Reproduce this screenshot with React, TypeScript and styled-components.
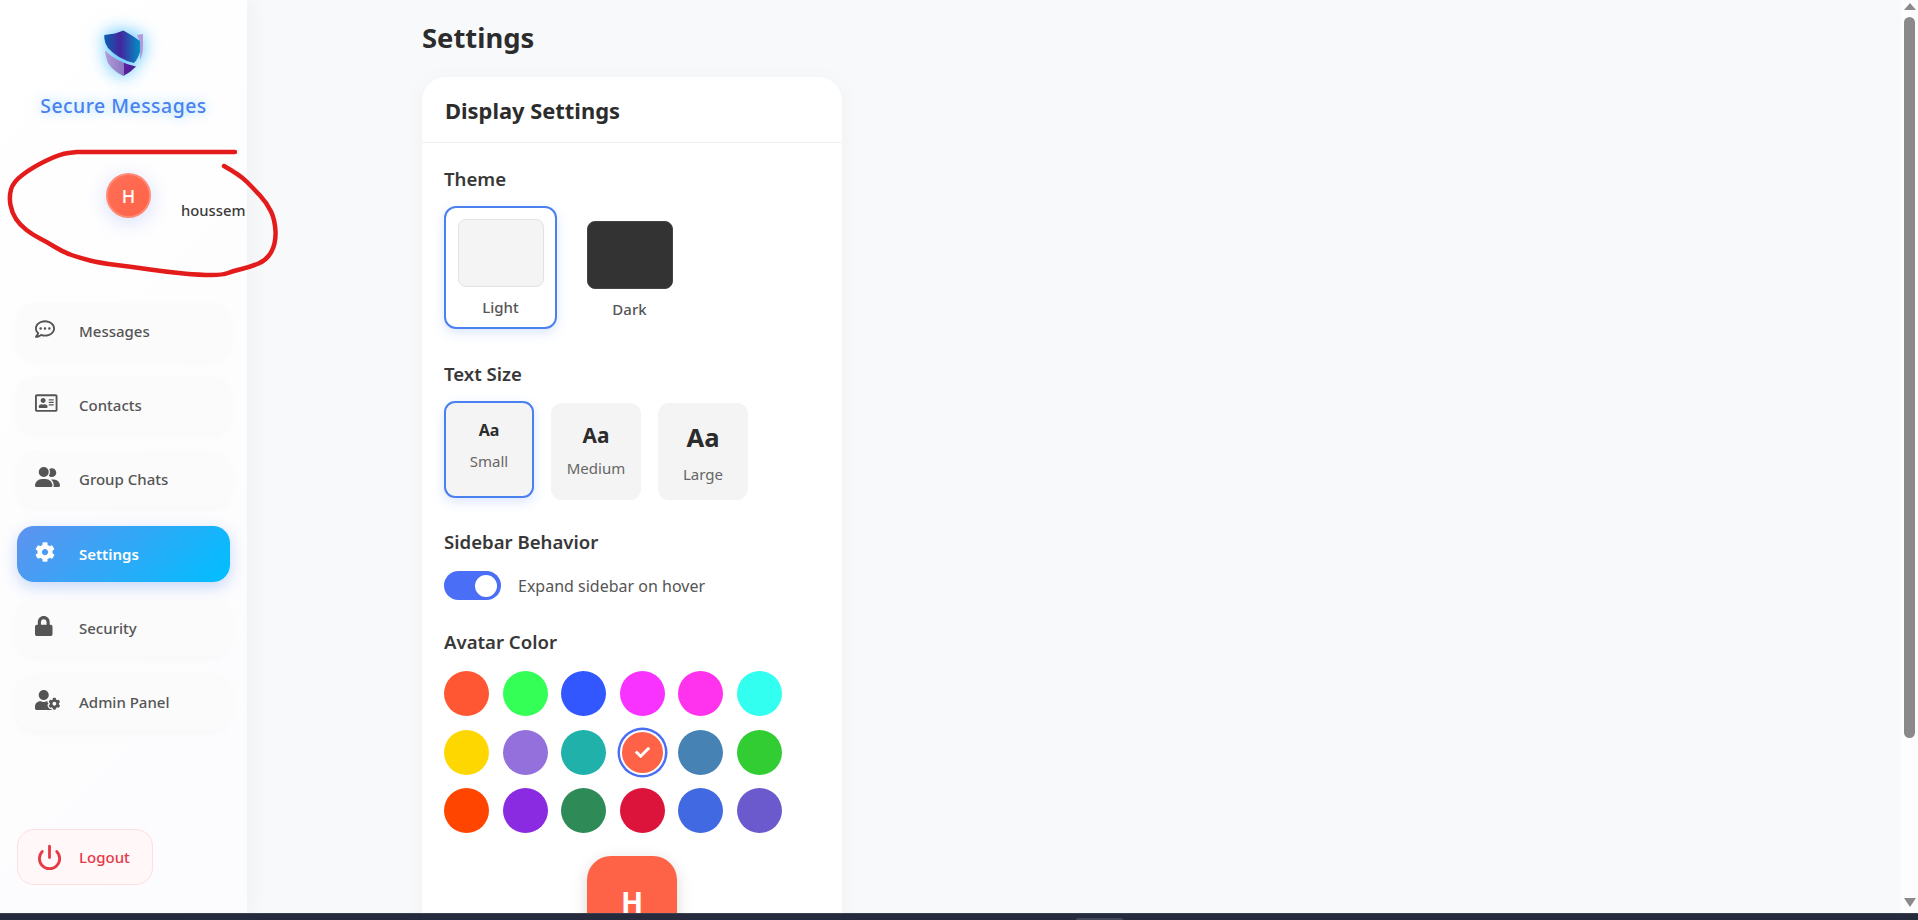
import * as React from 'react';
import styled, { createGlobalStyle } from 'styled-components';
import {
    FaRegCommentDots,
    FaRegAddressCard,
    FaCog,
    FaLock,
    FaUserCog,
    FaCheck,
} from 'react-icons/fa';
import { FaUserGroup } from 'react-icons/fa6';
import { Power } from 'lucide-react';

const GlobalStyle = createGlobalStyle`
    html, body {
        margin: 0;
        padding: 0;
        height: 100%;
        overflow: hidden;
        font-family: "Noto Sans", "Open Sans", sans-serif;
    }
    * {
        box-sizing: border-box;
    }
`;

const Page = styled.div`
    position: relative;
    width: 1918px;
    height: 920px;
    display: flex;
    flex-direction: column;
`;
const Frame = styled.div`
    flex: 1;
    display: flex;
    min-height: 0;
    overflow: hidden;
    background-color: #f8f9fb;
`;
const Sidebar = styled.aside`
    position: relative;
    z-index: 1;
    width: 247px;
    flex-shrink: 0;
    display: flex;
    flex-direction: column;
    padding: 30px 17px 28px;
    background: linear-gradient(135deg, #ffffff, #fcfbfd);
    box-shadow: 4px 0 20px rgba(0, 0, 0, 0.04);
`;
const Brand = styled.div`
    display: flex;
    flex-direction: column;
    align-items: center;
    gap: 16px;
`;
const ShieldSvg = styled.svg`
    display: block;
    filter: drop-shadow(0 0 9px rgba(0, 170, 255, 0.75));
`;
const BrandName = styled.div`
    font-size: 19.4px;
    line-height: 26px;
    font-weight: 500;
    letter-spacing: 0.5px;
    white-space: nowrap;
    color: #4a80f0;
    text-shadow: 0 0 12px rgba(0, 170, 255, 0.45);
`;
const UserBox = styled.div`
    height: 184px;
    display: flex;
    align-items: flex-start;
    padding: 54px 0 0 89px;
`;
const UserAvatar = styled.div`
    width: 45px;
    height: 45px;
    border-radius: 50%;
    flex-shrink: 0;
    display: flex;
    align-items: center;
    justify-content: center;
    border: 2px solid #ff8a75;
    background: linear-gradient(135deg, #ff6f58, #ff6347);
    color: #fff;
    font-size: 18px;
    font-weight: 500;
    box-shadow: 0 4px 20px rgba(74, 110, 240, 0.22);
`;
const UserName = styled.div`
    margin: 27px 0 0 30px;
    font-size: 14.8px;
    line-height: 20px;
    font-weight: 500;
    color: #3a3a3a;
    white-space: nowrap;
`;
const Nav = styled.nav`
    display: flex;
    flex-direction: column;
    gap: 18.2px;
`;
const NavItem = styled.div<{ $active?: boolean }>`
    height: 56px;
    display: flex;
    align-items: center;
    padding-left: 18px;
    border-radius: 17px;
    font-size: 15px;
    font-weight: ${(p) => (p.$active ? 600 : 500)};
    color: ${(p) => (p.$active ? '#fff' : '#555')};
    background: ${(p) => (p.$active ? 'linear-gradient(135deg, #5f92ef, #00bfff)' : '#fbfbfb')};
    box-shadow: ${(p) => (p.$active ? '0 5px 16px rgba(74, 128, 240, 0.3)' : '0 3px 10px rgba(0, 0, 0, 0.025)')};
`;
const NavIcon = styled.span<{ $width: number }>`
    width: 26px;
    margin-right: 18px;
    margin-top: -4px;
    display: flex;
    svg {
        width: ${(p) => p.$width}px;
        height: 20px;
    }
`;
const LogoutButton = styled.div`
    margin-top: auto;
    width: 136px;
    height: 56px;
    display: flex;
    align-items: center;
    padding-left: 20px;
    border: 1px solid #fde0e2;
    border-radius: 17px;
    background-color: #fff7f8;
    font-size: 15px;
    font-weight: 500;
    color: #e63946;
`;
const LogoutIcon = styled.span`
    width: 23px;
    margin-right: 18px;
    display: flex;
    justify-content: center;
    svg {
        flex-shrink: 0;
    }
`;
const Main = styled.main`
    flex: 1;
    min-width: 0;
    padding: 17px 0 0 175px;
`;
const PageTitle = styled.h1`
    margin: 0 0 18px;
    font-size: 27.4px;
    line-height: 42px;
    font-weight: 700;
    color: #2c2c2c;
`;
const Card = styled.section`
    width: 420px;
    border-radius: 24px;
    background-color: #fff;
    box-shadow: 0 4px 24px rgba(0, 0, 0, 0.04);
`;
const CardHeader = styled.header`
    height: 66px;
    display: flex;
    align-items: center;
    padding: 2px 23px 0;
    border-bottom: 1px solid #eff0f2;
`;
const CardTitle = styled.h2`
    margin: 0;
    font-size: 21.9px;
    font-weight: 700;
    color: #2c2c2c;
`;
const CardBody = styled.div`
    padding: 23px 22px 0;
`;
const Section = styled.div<{ $gap: number }>`
    margin-bottom: ${(p) => p.$gap}px;
`;
const SectionTitle = styled.h3`
    margin: 0 0 16px;
    font-size: 18.6px;
    line-height: 26px;
    font-weight: 600;
    color: #383838;
`;
const Options = styled.div<{ $gap: number }>`
    display: flex;
    gap: ${(p) => p.$gap}px;
`;
const ThemeOption = styled.div<{ $active?: boolean }>`
    width: 113px;
    height: 123px;
    display: flex;
    flex-direction: column;
    align-items: center;
    padding-top: 11px;
    border: 2px solid ${(p) => (p.$active ? '#4a80f0' : 'transparent')};
    border-radius: 12px;
    transform: ${(p) => (p.$active ? 'translateY(-2px)' : 'none')};
    box-shadow: ${(p) => (p.$active ? '0 4px 12px rgba(74, 128, 240, 0.2)' : 'none')};
`;
const ThemeSwatch = styled.div<{ $dark?: boolean }>`
    width: 86px;
    height: 68px;
    border-radius: 8px;
    border: 1px solid ${(p) => (p.$dark ? '#444' : '#e2e2e2')};
    background-color: ${(p) => (p.$dark ? '#333' : '#f4f4f4')};
`;
const OptionLabel = styled.div`
    margin-top: 10px;
    font-size: 15px;
    line-height: 20px;
    font-weight: 500;
    color: #555;
`;
const SizeOption = styled.div<{ $active?: boolean }>`
    width: 90px;
    height: 97px;
    display: flex;
    flex-direction: column;
    align-items: center;
    padding-top: 17.5px;
    border: 2px solid ${(p) => (p.$active ? '#4a80f0' : 'transparent')};
    border-radius: 11px;
    background-color: #f4f4f4;
    transform: ${(p) => (p.$active ? 'translateY(-2px)' : 'none')};
    box-shadow: ${(p) => (p.$active ? '0 4px 12px rgba(74, 128, 240, 0.2)' : 'none')};
`;
const SizeSample = styled.div<{ $size: number }>`
    font-size: ${(p) => p.$size}px;
    line-height: 1.2;
    font-weight: 700;
    color: #2c2c2c;
`;
const SizeLabel = styled.div`
    margin-top: 11px;
    font-size: 15px;
    line-height: 20px;
    color: #666;
`;
const ToggleRow = styled.div`
    display: flex;
    align-items: center;
    gap: 17px;
    font-size: 16px;
    color: #555;
`;
const Toggle = styled.div`
    width: 57px;
    height: 29px;
    display: flex;
    align-items: center;
    justify-content: flex-end;
    padding-right: 4px;
    border-radius: 15px;
    background-color: #4a6ef5;
`;
const ToggleKnob = styled.div`
    width: 22px;
    height: 22px;
    border-radius: 50%;
    background-color: #fff;
`;
const ColorGrid = styled.div`
    display: grid;
    grid-template-columns: repeat(6, 45px);
    column-gap: 13.6px;
    row-gap: 13.6px;
`;
const Swatch = styled.div<{ $color: string; $active?: boolean }>`
    width: 45px;
    height: 45px;
    display: flex;
    align-items: center;
    justify-content: center;
    border-radius: 50%;
    font-size: 15px;
    color: #fff;
    background-color: ${(p) => p.$color};
    ${(p) => p.$active && 'border: 2px solid #fff; box-shadow: 0 0 0 2.5px #4a6ef5;'}
`;
const PreviewRow = styled.div`
    display: flex;
    justify-content: center;
    margin-top: 23px;
`;
const PreviewAvatar = styled.div`
    width: 90px;
    height: 90px;
    display: flex;
    align-items: center;
    justify-content: center;
    border-radius: 24px;
    background-color: #ff6347;
    color: #fff;
    font-size: 29px;
    font-weight: 700;
    box-shadow: 0 4px 16px rgba(0, 0, 0, 0.15);
`;
const ScrollTrack = styled.div`
    width: 17px;
    flex-shrink: 0;
    display: flex;
    flex-direction: column;
    align-items: center;
    background-color: #fdfdfd;
    padding: 3px 0 6px;
`;
const ArrowUp = styled.div`
    width: 0;
    height: 0;
    border-left: 6px solid transparent;
    border-right: 6px solid transparent;
    border-bottom: 7px solid #8a8a8a;
`;
const ArrowDown = styled(ArrowUp)`
    margin-top: auto;
    border-bottom: none;
    border-top: 9px solid #8a8a8a;
`;
const ScrollThumb = styled.div`
    width: 11px;
    height: 721px;
    margin-top: 7px;
    border-radius: 6px;
    background-color: #8a8a8a;
`;
const Taskbar = styled.div`
    position: relative;
    height: 7px;
    flex-shrink: 0;
    background-color: #252b3c;
    border-top: 1px solid #3a4050;
`;
const TaskbarTab = styled.div`
    position: absolute;
    left: 1076px;
    bottom: 0;
    width: 47px;
    height: 2px;
    border-radius: 2px 2px 0 0;
    background-color: #444a5a;
`;
const Scribble = styled.svg`
    position: absolute;
    left: 0;
    top: 0;
    z-index: 2;
    pointer-events: none;
`;

const navItems = [
    { label: 'Messages', icon: <FaRegCommentDots />, width: 20 },
    { label: 'Contacts', icon: <FaRegAddressCard />, width: 22.5 },
    { label: 'Group Chats', icon: <FaUserGroup />, width: 25 },
    { label: 'Settings', icon: <FaCog />, width: 20, active: true },
    { label: 'Security', icon: <FaLock />, width: 17.5 },
    { label: 'Admin Panel', icon: <FaUserCog />, width: 25 },
];

const avatarColors = [
    '#ff5733', '#33ff57', '#3357ff', '#f833ff', '#ff33ee', '#33fff0',
    '#ffd700', '#9370db', '#20b2aa', '#ff6347', '#4682b4', '#32cd32',
    '#ff4500', '#8a2be2', '#2e8b57', '#dc143c', '#4169e1', '#6a5acd',
];

// hand-drawn circle round the user box, traced from the screenshot
const scribblePoints = [
    [224, 166], [240, 175], [253, 188], [267, 203], [275, 220], [276, 243], [267, 260], [250, 267],
    [233, 271], [223, 275], [200, 275], [167, 272], [133, 267], [100, 263], [80, 258], [63, 252],
    [47, 242], [33, 235], [20, 225], [12, 213], [9, 197], [13, 182], [33, 167], [60, 154], [77, 152],
];

const scribblePath = () => {
    let d = `M${scribblePoints[0].join(' ')}`;
    for (let i = 1; i < scribblePoints.length - 1; i++) {
        const [x, y] = scribblePoints[i];
        const [nx, ny] = scribblePoints[i + 1];
        d += ` Q${x} ${y} ${(x + nx) / 2} ${(y + ny) / 2}`;
    }
    return `${d} L77 152 L235 152`;
};

const Shield = () => (
    <ShieldSvg width="40" height="47" viewBox="104 30 40 47">
        <defs>
            <linearGradient id="shieldTop" x1="0" x2="1" y1="0" y2="0">
                <stop offset="0" stopColor="#0a62b0" />
                <stop offset="0.45" stopColor="#44259e" />
                <stop offset="1" stopColor="#0090c4" />
            </linearGradient>
            <linearGradient id="shieldLow" x1="0" x2="1" y1="0" y2="0">
                <stop offset="0" stopColor="#b49ad8" />
                <stop offset="0.6" stopColor="#8a78c0" />
                <stop offset="0.62" stopColor="#5b1fa0" />
                <stop offset="1" stopColor="#4a1f96" />
            </linearGradient>
        </defs>
        <path d="M137 35 L143 34 L143 46 Q143 54 140 60 L140 42 Z" fill="#b49ad8" />
        <path d="M104.3 35 Q116 34 123.3 30.5 Q130 34 140 41 L140 52 Q138 59 134 63 Q118 59 108 48 Q104.5 43 104.3 38 Z" fill="url(#shieldTop)" />
        <path d="M105 50.5 Q116 62 136 66.5 Q131 72 123.3 76 Q113 71 108 63 Q105.5 57 105 50.5 Z" fill="url(#shieldLow)" />
    </ShieldSvg>
);

export default function App() {
    return (
        <Page>
            <GlobalStyle />
            <Frame>
                <Sidebar>
                    <Brand>
                        <Shield />
                        <BrandName>Secure Messages</BrandName>
                    </Brand>
                    <UserBox>
                        <UserAvatar>H</UserAvatar>
                        <UserName>houssem</UserName>
                    </UserBox>
                    <Nav>
                        {navItems.map((item) => (
                            <NavItem key={item.label} $active={item.active}>
                                <NavIcon $width={item.width}>{item.icon}</NavIcon>
                                {item.label}
                            </NavItem>
                        ))}
                    </Nav>
                    <LogoutButton>
                        <LogoutIcon><Power size={27} strokeWidth={2.5} /></LogoutIcon>
                        Logout
                    </LogoutButton>
                </Sidebar>
                <Main>
                    <PageTitle>Settings</PageTitle>
                    <Card>
                        <CardHeader>
                            <CardTitle>Display Settings</CardTitle>
                        </CardHeader>
                        <CardBody>
                            <Section $gap={30}>
                                <SectionTitle>Theme</SectionTitle>
                                <Options $gap={16}>
                                    <ThemeOption $active>
                                        <ThemeSwatch />
                                        <OptionLabel>Light</OptionLabel>
                                    </ThemeOption>
                                    <ThemeOption>
                                        <ThemeSwatch $dark />
                                        <OptionLabel>Dark</OptionLabel>
                                    </ThemeOption>
                                </Options>
                            </Section>
                            <Section $gap={29}>
                                <SectionTitle>Text Size</SectionTitle>
                                <Options $gap={17}>
                                    <SizeOption $active>
                                        <SizeSample $size={16}>Aa</SizeSample>
                                        <SizeLabel>Small</SizeLabel>
                                    </SizeOption>
                                    <SizeOption>
                                        <SizeSample $size={20.8}>Aa</SizeSample>
                                        <SizeLabel>Medium</SizeLabel>
                                    </SizeOption>
                                    <SizeOption>
                                        <SizeSample $size={25.6}>Aa</SizeSample>
                                        <SizeLabel>Large</SizeLabel>
                                    </SizeOption>
                                </Options>
                            </Section>
                            <Section $gap={29}>
                                <SectionTitle>Sidebar Behavior</SectionTitle>
                                <ToggleRow>
                                    <Toggle><ToggleKnob /></Toggle>
                                    Expand sidebar on hover
                                </ToggleRow>
                            </Section>
                            <Section $gap={0}>
                                <SectionTitle>Avatar Color</SectionTitle>
                                <ColorGrid>
                                    {avatarColors.map((color, i) => (
                                        <Swatch key={color} $color={color} $active={i === 9}>
                                            {i === 9 && <FaCheck />}
                                        </Swatch>
                                    ))}
                                </ColorGrid>
                            </Section>
                            <PreviewRow>
                                <PreviewAvatar>H</PreviewAvatar>
                            </PreviewRow>
                        </CardBody>
                    </Card>
                </Main>
                <ScrollTrack>
                    <ArrowUp />
                    <ScrollThumb />
                    <ArrowDown />
                </ScrollTrack>
            </Frame>
            <Taskbar>
                <TaskbarTab />
            </Taskbar>
            <Scribble width="300" height="300" viewBox="0 0 300 300" fill="none">
                <path
                    d={scribblePath()}
                    stroke="#e31b1b"
                    strokeWidth="4.5"
                    strokeLinecap="round"
                    strokeLinejoin="round"
                />
            </Scribble>
        </Page>
    );
}
